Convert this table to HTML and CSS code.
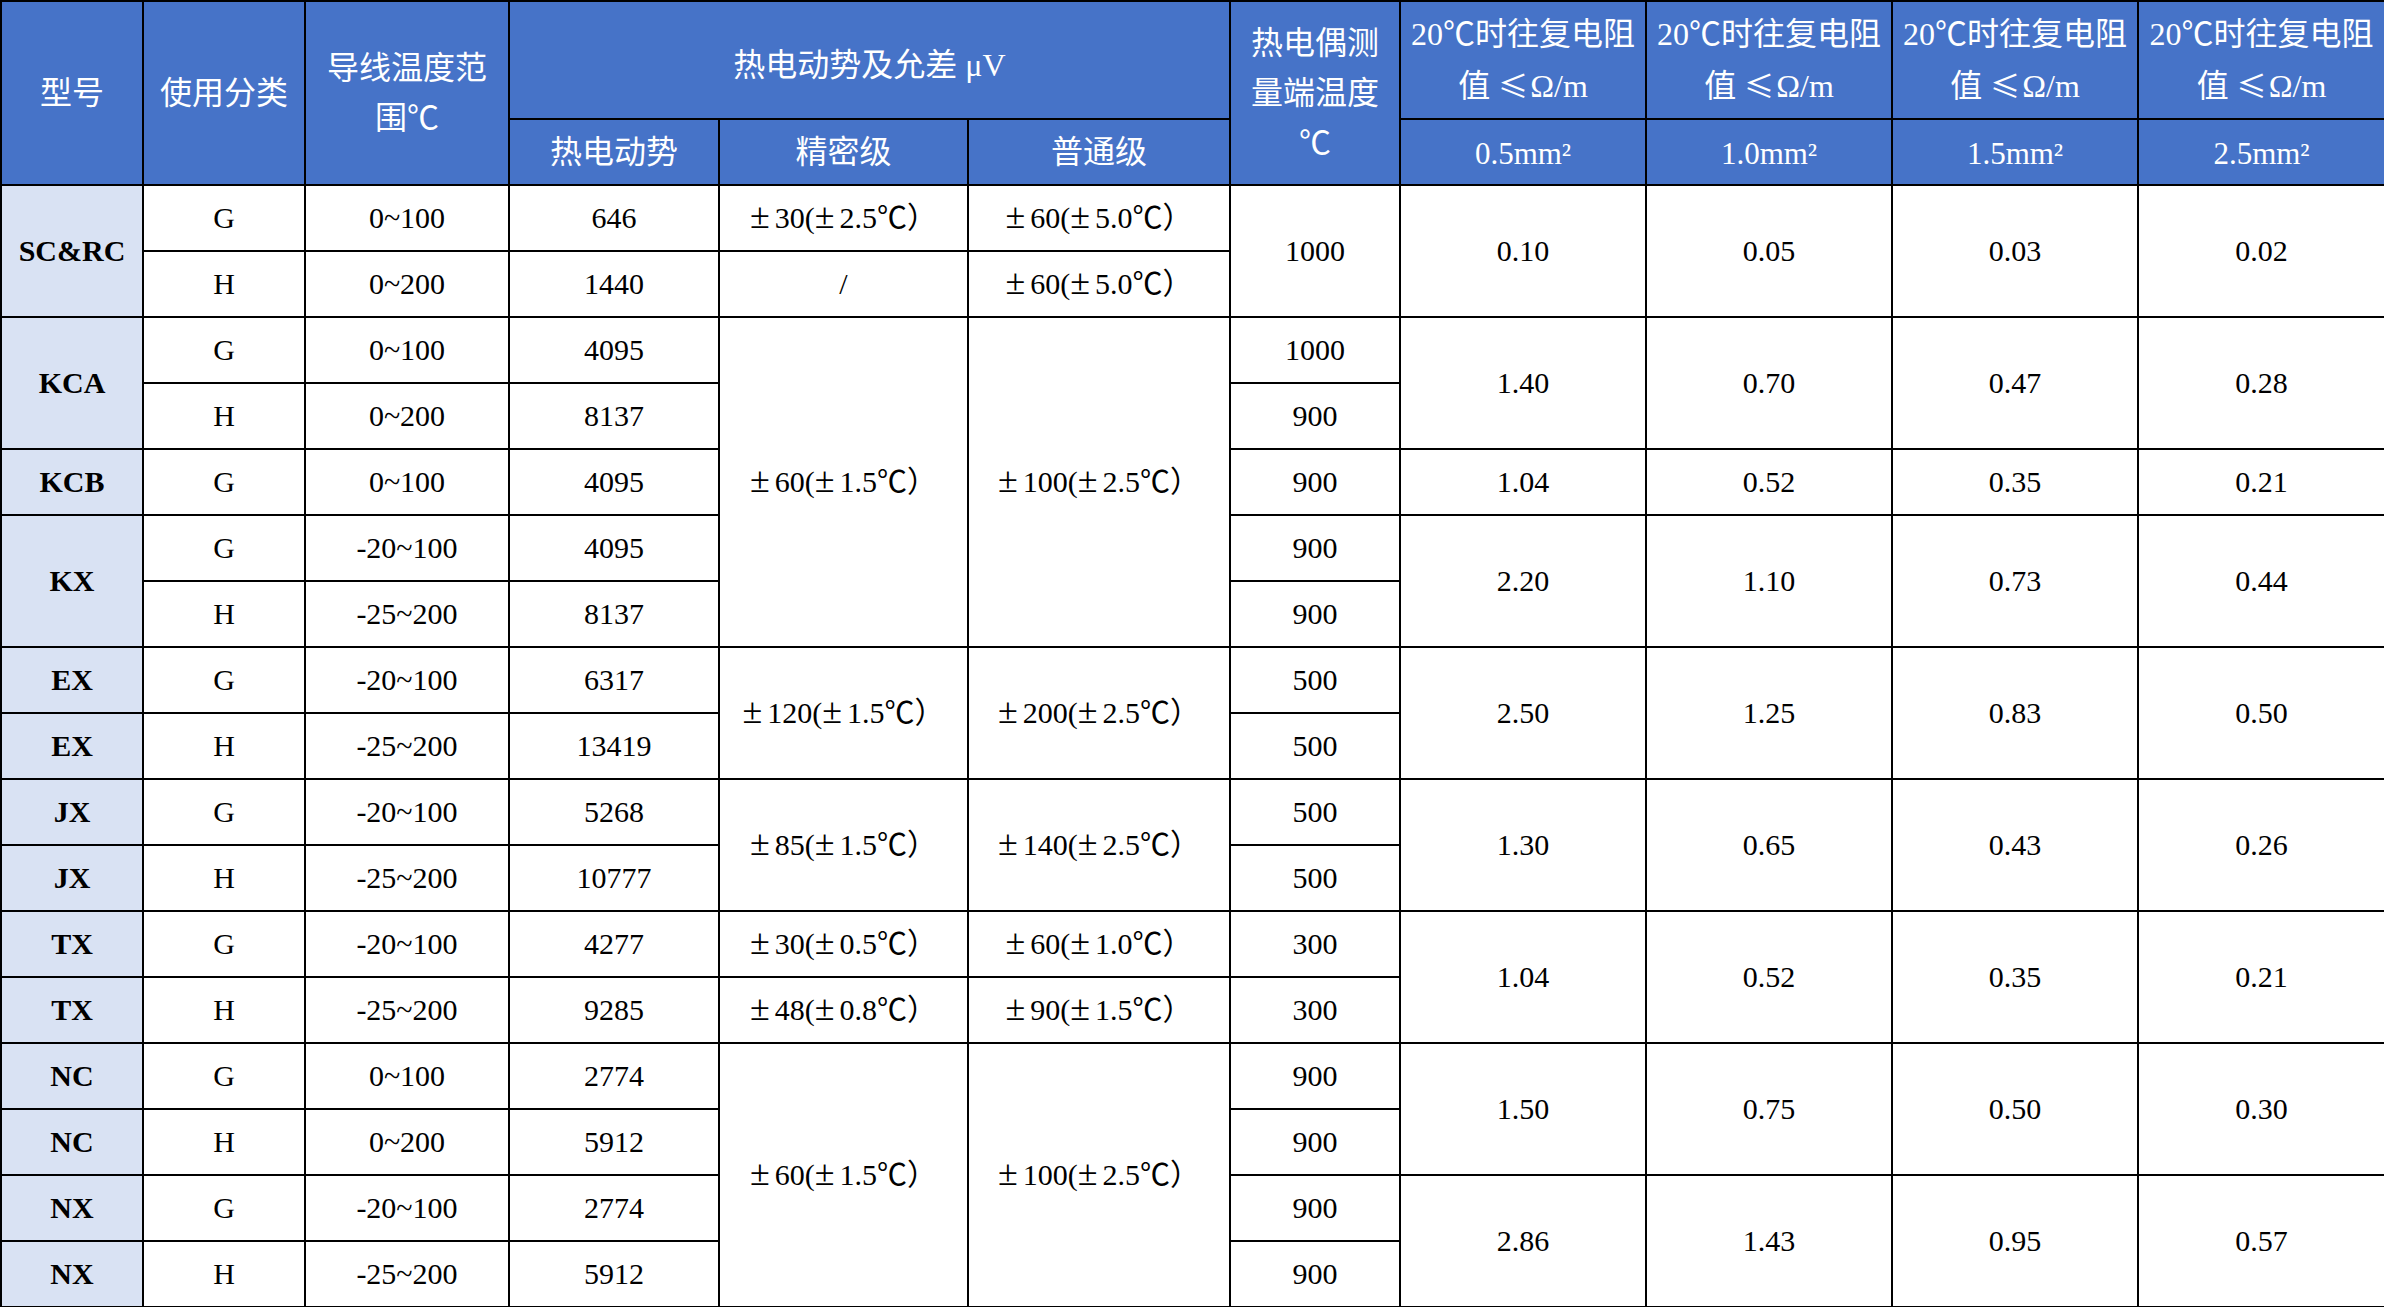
FILE: index.html
```html
<!DOCTYPE html>
<html lang="zh-CN">
<head>
<meta charset="utf-8">
<title>补偿导线参数表</title>
<link rel="stylesheet" href="styles.css">
</head>
<body>
<table class="spec">
  <colgroup>
    <col class="c-model"><col class="c-use"><col class="c-range"><col class="c-emf"><col class="c-prec"><col class="c-norm"><col class="c-temp"><col class="c-res"><col class="c-res"><col class="c-res"><col class="c-res-last">
  </colgroup>
  <thead>
    <tr class="h1">
      <th rowspan="2">型号</th>
      <th rowspan="2">使用分类</th>
      <th rowspan="2">导线温度范<br>围℃</th>
      <th colspan="3" class="group">热电动势及允差 μV</th>
      <th rowspan="2">热电偶测<br>量端温度<br>℃</th>
      <th>20℃时往复电阻<br>值 <span class="le">≤</span>Ω/m</th>
      <th>20℃时往复电阻<br>值 <span class="le">≤</span>Ω/m</th>
      <th>20℃时往复电阻<br>值 <span class="le">≤</span>Ω/m</th>
      <th>20℃时往复电阻<br>值 <span class="le">≤</span>Ω/m</th>
    </tr>
    <tr class="h2">
      <th>热电动势</th>
      <th>精密级</th>
      <th>普通级</th>
      <th class="sz">0.5mm²</th>
      <th class="sz">1.0mm²</th>
      <th class="sz">1.5mm²</th>
      <th class="sz">2.5mm²</th>
    </tr>
  </thead>
  <tbody>
    <tr>
      <td class="model" rowspan="2">SC&amp;RC</td><td>G</td><td>0~100</td><td>646</td>
      <td><span class="pm">±</span>30(<span class="pm">±</span>2.5℃）</td>
      <td><span class="pm">±</span>60(<span class="pm">±</span>5.0℃）</td>
      <td rowspan="2">1000</td>
      <td rowspan="2">0.10</td><td rowspan="2">0.05</td><td rowspan="2">0.03</td><td rowspan="2">0.02</td>
    </tr>
    <tr>
      <td>H</td><td>0~200</td><td>1440</td>
      <td>/</td>
      <td><span class="pm">±</span>60(<span class="pm">±</span>5.0℃）</td>
    </tr>
    <tr>
      <td class="model" rowspan="2">KCA</td><td>G</td><td>0~100</td><td>4095</td>
      <td rowspan="5"><span class="pm">±</span>60(<span class="pm">±</span>1.5℃）</td>
      <td rowspan="5"><span class="pm">±</span>100(<span class="pm">±</span>2.5℃）</td>
      <td>1000</td>
      <td rowspan="2">1.40</td><td rowspan="2">0.70</td><td rowspan="2">0.47</td><td rowspan="2">0.28</td>
    </tr>
    <tr>
      <td>H</td><td>0~200</td><td>8137</td><td>900</td>
    </tr>
    <tr>
      <td class="model">KCB</td><td>G</td><td>0~100</td><td>4095</td><td>900</td>
      <td>1.04</td><td>0.52</td><td>0.35</td><td>0.21</td>
    </tr>
    <tr>
      <td class="model" rowspan="2">KX</td><td>G</td><td>-20~100</td><td>4095</td><td>900</td>
      <td rowspan="2">2.20</td><td rowspan="2">1.10</td><td rowspan="2">0.73</td><td rowspan="2">0.44</td>
    </tr>
    <tr>
      <td>H</td><td>-25~200</td><td>8137</td><td>900</td>
    </tr>
    <tr>
      <td class="model">EX</td><td>G</td><td>-20~100</td><td>6317</td>
      <td rowspan="2"><span class="pm">±</span>120(<span class="pm">±</span>1.5℃）</td>
      <td rowspan="2"><span class="pm">±</span>200(<span class="pm">±</span>2.5℃）</td>
      <td>500</td>
      <td rowspan="2">2.50</td><td rowspan="2">1.25</td><td rowspan="2">0.83</td><td rowspan="2">0.50</td>
    </tr>
    <tr>
      <td class="model">EX</td><td>H</td><td>-25~200</td><td>13419</td><td>500</td>
    </tr>
    <tr>
      <td class="model">JX</td><td>G</td><td>-20~100</td><td>5268</td>
      <td rowspan="2"><span class="pm">±</span>85(<span class="pm">±</span>1.5℃）</td>
      <td rowspan="2"><span class="pm">±</span>140(<span class="pm">±</span>2.5℃）</td>
      <td>500</td>
      <td rowspan="2">1.30</td><td rowspan="2">0.65</td><td rowspan="2">0.43</td><td rowspan="2">0.26</td>
    </tr>
    <tr>
      <td class="model">JX</td><td>H</td><td>-25~200</td><td>10777</td><td>500</td>
    </tr>
    <tr>
      <td class="model">TX</td><td>G</td><td>-20~100</td><td>4277</td>
      <td><span class="pm">±</span>30(<span class="pm">±</span>0.5℃）</td>
      <td><span class="pm">±</span>60(<span class="pm">±</span>1.0℃）</td>
      <td>300</td>
      <td rowspan="2">1.04</td><td rowspan="2">0.52</td><td rowspan="2">0.35</td><td rowspan="2">0.21</td>
    </tr>
    <tr>
      <td class="model">TX</td><td>H</td><td>-25~200</td><td>9285</td>
      <td><span class="pm">±</span>48(<span class="pm">±</span>0.8℃）</td>
      <td><span class="pm">±</span>90(<span class="pm">±</span>1.5℃）</td>
      <td>300</td>
    </tr>
    <tr>
      <td class="model">NC</td><td>G</td><td>0~100</td><td>2774</td>
      <td rowspan="4"><span class="pm">±</span>60(<span class="pm">±</span>1.5℃）</td>
      <td rowspan="4"><span class="pm">±</span>100(<span class="pm">±</span>2.5℃）</td>
      <td>900</td>
      <td rowspan="2">1.50</td><td rowspan="2">0.75</td><td rowspan="2">0.50</td><td rowspan="2">0.30</td>
    </tr>
    <tr>
      <td class="model">NC</td><td>H</td><td>0~200</td><td>5912</td><td>900</td>
    </tr>
    <tr>
      <td class="model">NX</td><td>G</td><td>-20~100</td><td>2774</td><td>900</td>
      <td rowspan="2">2.86</td><td rowspan="2">1.43</td><td rowspan="2">0.95</td><td rowspan="2">0.57</td>
    </tr>
    <tr>
      <td class="model">NX</td><td>H</td><td>-25~200</td><td>5912</td><td>900</td>
    </tr>
  </tbody>
</table>
</body>
</html>
```

FILE: styles.css
```css
html, body {
  margin: 0;
  padding: 0;
  background: #ffffff;
}

.spec {
  border-collapse: collapse;
  table-layout: fixed;
  width: 2384px;
  font-family: "Liberation Serif", "Noto Sans CJK SC", serif;
  color: #000000;
}

.c-model { width: 142px; }
.c-use { width: 162px; }
.c-range { width: 204px; }
.c-emf { width: 210px; }
.c-prec { width: 249px; }
.c-norm { width: 262px; }
.c-temp { width: 170px; }
.c-res { width: 246px; }
.c-res-last { width: 247px; }

.spec th,
.spec td {
  border: 2px solid #000000;
  padding: 0;
  text-align: center;
  vertical-align: middle;
}

.spec th {
  background: #4673c8;
  color: #ffffff;
  font-weight: normal;
  font-size: 32px;
  line-height: 50px;
  white-space: nowrap;
}

.spec th.group {
  padding-top: 10px;
}

.spec .h1 { height: 118px; }
.spec .h2 { height: 66px; }

.spec th.sz {
  font-size: 31px;
  padding-top: 4px;
}

.spec .le {
  font-family: "Noto Sans CJK SC", sans-serif;
  font-size: 30px;
  padding-right: 2px;
}

.spec tbody tr { height: 66px; }

.spec td {
  font-size: 30px;
  line-height: 34px;
  white-space: nowrap;
  background: #ffffff;
}

.spec td.model {
  background: #d9e2f3;
  font-weight: bold;
}

.pm {
  font-size: 36px;
  line-height: 30px;
  padding-right: 0.14em;
}
```
